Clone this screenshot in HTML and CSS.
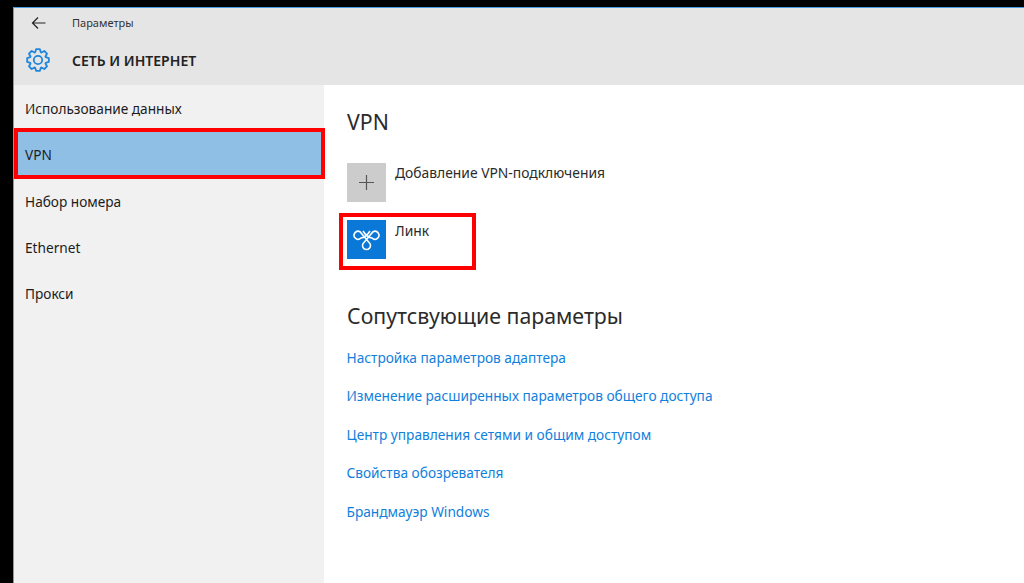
FILE: index.html
```html
<!DOCTYPE html>
<html lang="ru">
<head>
<meta charset="utf-8">
<title>Параметры</title>
<link rel="stylesheet" href="styles.css">
</head>
<body>
<div class="window">
  <header class="header">
    <div class="titlebar">
      <svg class="back" width="16" height="14" viewBox="0 0 16 14"><path d="M14.5 7H1.5M7 1.5L1.5 7L7 12.5" fill="none" stroke="#222" stroke-width="1.2"/></svg>
      <span class="apptitle">Параметры</span>
    </div>
    <div class="pagebar">
      <svg class="gear" width="24" height="24" viewBox="0 0 24 24"><polygon points="9.2,4.29 10.09,1.17 13.91,1.17 14.8,4.29 15.47,4.57 18.31,2.99 21.01,5.69 19.43,8.53 19.71,9.2 22.83,10.09 22.83,13.91 19.71,14.8 19.43,15.47 21.01,18.31 18.31,21.01 15.47,19.43 14.8,19.71 13.91,22.83 10.09,22.83 9.2,19.71 8.53,19.43 5.69,21.01 2.99,18.31 4.57,15.47 4.29,14.8 1.17,13.91 1.17,10.09 4.29,9.2 4.57,8.53 2.99,5.69 5.69,2.99 8.53,4.57" fill="none" stroke="#1f86dc" stroke-width="1.800" stroke-linejoin="round"/><circle cx="12" cy="12" r="4.200" fill="none" stroke="#1f86dc" stroke-width="1.800"/></svg>
      <span class="pagetitle">СЕТЬ И ИНТЕРНЕТ</span>
    </div>
  </header>
  <div class="main">
    <nav class="sidebar">
      <div class="navitem">Использование данных</div>
      <div class="navitem active">VPN</div>
      <div class="navitem">Набор номера</div>
      <div class="navitem">Ethernet</div>
      <div class="navitem">Прокси</div>
    </nav>
    <section class="content">
      <h2 class="heading">VPN</h2>
      <div class="tile-row">
        <div class="tile tile-add">
          <svg width="15" height="15" viewBox="0 0 15 15"><path d="M7.500 0v15M0 7.500h15" stroke="#555" stroke-width="1.200"/></svg>
        </div>
        <span class="tile-label">Добавление VPN-подключения</span>
      </div>
      <div class="tile-row marked">
        <div class="tile tile-vpn">
          <svg width="39" height="39" viewBox="0 0 39 39"><path d="M23 11C20.500 15 18 17.500 14 18A4 4 0 1 1 13 11.700L19.500 19.500L22.300 22.700A4 4 0 1 1 16.700 22.700L19.500 19.500L26 11.700A4 4 0 1 1 25 18C21 17.500 18.500 15 16 11" fill="none" stroke="#fff" stroke-width="1.600"/></svg>
        </div>
        <span class="tile-label">Линк</span>
      </div>
      <h2 class="heading related">Сопутсвующие параметры</h2>
      <ul class="links">
        <li>Настройка параметров адаптера</li>
        <li>Изменение расширенных параметров общего доступа</li>
        <li>Центр управления сетями и общим доступом</li>
        <li>Свойства обозревателя</li>
        <li>Брандмауэр Windows</li>
      </ul>
    </section>
  </div>
</div>
</body>
</html>
```

FILE: styles.css
```css
* { box-sizing: border-box; }
html, body { margin: 0; height: 100%; overflow: hidden; }
body {
  background: #000;
  padding: 7px 0 0 13px;
  font-family: "Noto Sans", "Open Sans", sans-serif;
  color: #1c1c1c;
}
.window {
  height: 576px;
  border-left: 1px solid #5aa5e6;
  border-top: 1px solid #4a9be0;
  background: #fff;
  display: flex;
  flex-direction: column;
}
.header { height: 77px; background: #e5e5e5; flex: none; }
.titlebar { height: 29px; display: flex; align-items: center; padding-left: 17px; }
.back { flex: none; }
.apptitle { margin-left: 25px; font-size: 11px; color: #333; }
.pagebar { height: 48px; display: flex; align-items: center; padding: 0 0 2px 12px; }
.gear { flex: none; }
.pagetitle { margin-left: 22px; font-size: 14px; font-weight: 600; color: #222; }
.main { flex: 1; display: flex; min-height: 0; }
.sidebar { width: 310px; background: #f1f1f1; flex: none; }
.navitem {
  height: 46.400px;
  display: flex;
  align-items: center;
  padding-left: 11px;
  font-size: 13.650px;
}
.navitem.active {
  position: relative;
  height: 51px;
  margin: -3px -1px -1.500px 0;
  border: 4px solid #f00;
  padding: 2px 0 0 7px;
  background: #90bfe6;
  z-index: 1;
}
.content { flex: 1; padding: 21px 0 0 23px; }
.heading { margin: 0; font-size: 21.300px; font-weight: 400; line-height: 32px; color: #2b2b2b; }
.tile-row { display: flex; align-items: flex-start; margin-top: 25px; width: 300px; }
.tile { width: 39px; height: 39px; display: flex; align-items: center; justify-content: center; flex: none; }
.tile-add { background: #cccccc; }
.tile-vpn { background: #0a78d7; }
.tile-label { margin-left: 9px; font-size: 13.850px; line-height: 20px; color: #2b2b2b; }
.tile-row.marked {
  margin: 11px 0 0 -8px;
  width: 137px;
  height: 57px;
  border: 4px solid #f00;
  padding: 3px 0 0 4px;
}
.marked .tile-label { margin-top: 1px; }
.related { margin-top: 30px; }
.links { list-style: none; margin: 6px 0 0 -0.500px; padding: 0; }
.links li { height: 38.500px; display: flex; align-items: center; font-size: 13.700px; color: #1180dc; }
```
